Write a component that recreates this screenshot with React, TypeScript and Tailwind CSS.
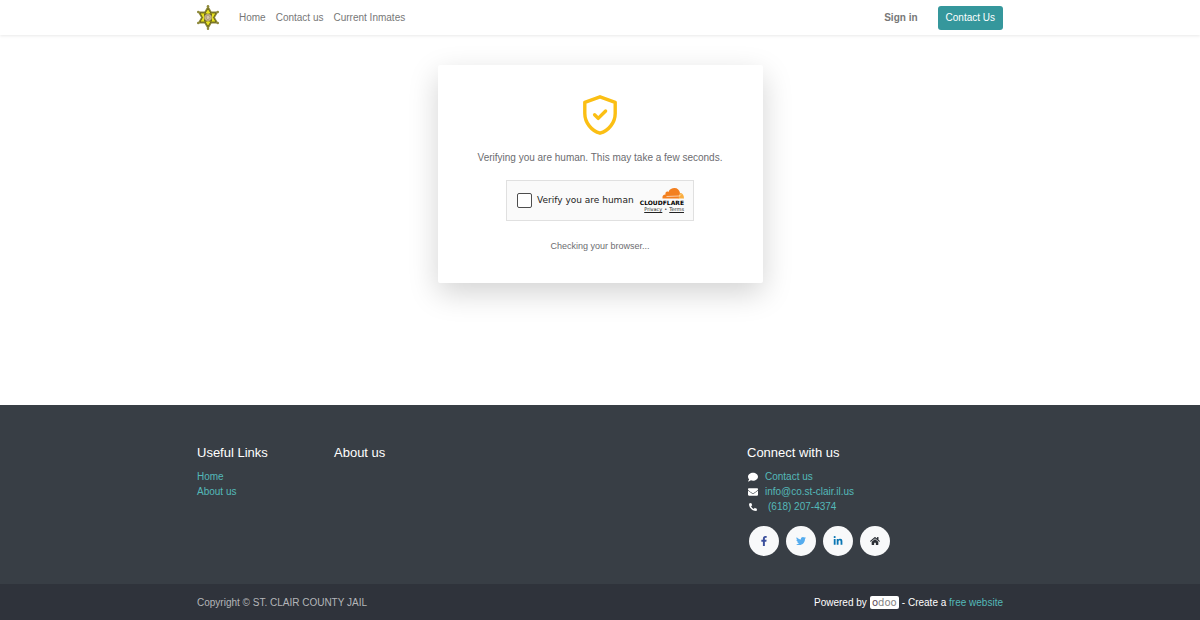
import type { ReactNode } from "react";
import { FaComment, FaEnvelope, FaFacebookF, FaHome, FaLinkedinIn, FaPhoneAlt, FaTwitter } from "react-icons/fa";

const navLinks = ["Home", "Contact us", "Current Inmates"];

const socials = [
  { name: "Facebook", icon: <FaFacebookF className="w-[10px] h-[10px] text-[#3b4f9c]" /> },
  { name: "Twitter", icon: <FaTwitter className="w-[10px] h-[10px] text-[#55acee]" /> },
  { name: "LinkedIn", icon: <FaLinkedinIn className="w-[10px] h-[10px] text-[#0976b4]" /> },
  { name: "Website", icon: <FaHome className="w-[10px] h-[10px] text-[#2b2f35]" /> },
];

function Container({ children, className = "" }: { children: ReactNode; className?: string }) {
  return <div className={`w-full max-w-[826px] mx-auto px-[10px] ${className}`}>{children}</div>;
}

function StarLogo() {
  return (
    <svg viewBox="0 0 44 50" className="w-[22px] h-[25px]" aria-hidden="true">
      <path
        d="M22 1 L29 13 L43 13 L36 25 L43 37 L29 37 L22 49 L15 37 L1 37 L8 25 L1 13 L15 13 Z"
        fill="#8f8a3c"
      />
      <path
        d="M22 7 L27.5 16 L38 16 L33 25 L38 34 L27.5 34 L22 43 L16.5 34 L6 34 L11 25 L6 16 L16.5 16 Z"
        fill="#e8e11f"
        stroke="#4d4b12"
        strokeWidth="1.4"
      />
      <path d="M15 17 L20 17 L14 23 Z M29 17 L24 17 L30 23 Z M15 33 L20 33 L14 27 Z M29 33 L24 33 L30 27 Z" fill="#2f2e0c" />
      <circle cx="22" cy="25" r="7.5" fill="#c9b98c" stroke="#7d7440" strokeWidth="1" />
      <path d="M18 22 L23 20 L26 25 L22 30 L19 27 Z" fill="#d8c8a8" stroke="#8c7662" />
      <g fill="#8f8a3c">
        <circle cx="22" cy="2.5" r="2.5" />
        <circle cx="22" cy="47.5" r="2.5" />
        <circle cx="2.5" cy="14" r="2.5" />
        <circle cx="41.5" cy="14" r="2.5" />
        <circle cx="2.5" cy="36" r="2.5" />
        <circle cx="41.5" cy="36" r="2.5" />
      </g>
    </svg>
  );
}

function ShieldCheck() {
  return (
    <svg
      viewBox="0 0 40 40"
      className="w-[40px] h-[40px]"
      fill="none"
      stroke="#fbbf14"
      strokeWidth="3.4"
      strokeLinecap="round"
      strokeLinejoin="round"
      aria-hidden="true"
    >
      <path d="M20 1.8 L35.2 7.3 V18.5 C35.2 27.5 28.5 36 20 38.2 C11.5 36 4.8 27.5 4.8 18.5 V7.3 Z" />
      <path d="M14.6 19.8 L18.2 23.4 L25.6 16" />
    </svg>
  );
}

function Turnstile() {
  return (
    <div className="flex items-center w-[188px] h-[41px] pl-[10px] pr-[9px] bg-[#fafafa] border border-[#e0e0e0] font-['DejaVu_Sans',sans-serif] text-[#232323]">
      <input
        id="human"
        type="checkbox"
        className="appearance-none shrink-0 w-[15px] h-[15px] bg-white border border-[#4d4d4d] rounded-[2px]"
      />
      <label htmlFor="human" className="ml-[5px] text-[9px] leading-[13px] whitespace-nowrap">
        Verify you are human
      </label>
      <div className="flex flex-col items-end ml-auto">
        <svg viewBox="0 0 44 22" className="w-[22px] h-[11px]" aria-hidden="true">
          <path
            d="M1 21 C0 16 3 13 7 13 C6 8 10 6 13 8 C15 2 20 0 25 0 C31 0 35 4 36 10 L34 21 Z"
            fill="#f38020"
          />
          <path d="M33 21 L36 10 C41 10 44 14 44 21 Z" fill="#faae40" />
          <path d="M9 17 L34 16 C36 16 37 14 38 13" fill="none" stroke="#fff" strokeWidth="1.2" />
        </svg>
        <span className="text-[6px] leading-[7px] font-bold text-black">CLOUDFLARE</span>
        <span className="flex gap-[2px] text-[5px] leading-[7px]">
          <a href="#privacy" className="underline">Privacy</a>
          <span>•</span>
          <a href="#terms" className="underline">Terms</a>
        </span>
      </div>
    </div>
  );
}

function ContactRow({ icon, children }: { icon: ReactNode; children: ReactNode }) {
  return (
    <li className="flex items-center">
      <span className="flex justify-center w-[12px] mr-[6px]">{icon}</span>
      {children}
    </li>
  );
}

export default function App() {
  return (
    <div className="min-h-screen flex flex-col bg-white font-['Liberation_Sans',Arial,sans-serif] text-[10px] leading-[15px]">
      <header className="relative bg-white shadow-[0_1px_3px_rgba(0,0,0,0.09)]">
        <Container className="flex items-center h-[35px] text-[#777777]">
          <a href="#home" aria-label="St. Clair County Jail">
            <StarLogo />
          </a>
          <nav className="flex gap-[10px] ml-[20px]">
            {navLinks.map((link) => (
              <a key={link} href="#nav">{link}</a>
            ))}
          </nav>
          <a href="#login" className="ml-auto mr-[20px] font-bold">Sign in</a>
          <button type="button" className="h-[24px] px-[8px] rounded-[3px] bg-[#35979c] text-white">
            Contact Us
          </button>
        </Container>
      </header>

      <main className="flex-1 pt-[30px] pb-[60px]">
        <section className="flex flex-col items-center w-full max-w-[325px] mx-auto py-[30px] bg-white rounded-[2px] shadow-[0_10px_30px_rgba(0,0,0,0.175)] text-[#6c6c70]">
          <ShieldCheck />
          <p className="mt-[15px] mb-[15px]">Verifying you are human. This may take a few seconds.</p>
          <Turnstile />
          <p className="mt-[18px] text-[9px] leading-[14px]">Checking your browser...</p>
        </section>
      </main>

      <footer className="bg-[#383e45] text-white">
        <Container className="flex pt-[40px] pb-[28px]">
          <div className="w-[137px]">
            <h5 className="mb-[9px] text-[13px] leading-[15px]">Useful Links</h5>
            <ul className="text-[#54b9b9]">
              <li><a href="#home">Home</a></li>
              <li><a href="#about">About us</a></li>
            </ul>
          </div>
          <div className="flex-1">
            <h5 className="text-[13px] leading-[15px]">About us</h5>
          </div>
          <div className="w-[256px]">
            <h5 className="mb-[9px] text-[13px] leading-[15px]">Connect with us</h5>
            <ul className="text-[#54b9b9]">
              <ContactRow icon={<FaComment className="w-[10px] h-[10px] text-white" />}>
                <a href="#contact">Contact us</a>
              </ContactRow>
              <ContactRow icon={<FaEnvelope className="w-[10px] h-[10px] text-white" />}>
                <a href="mailto:info@co.st-clair.il.us">info@co.st-clair.il.us</a>
              </ContactRow>
              <ContactRow icon={<FaPhoneAlt className="w-[8px] h-[8px] text-white" />}>
                <a href="tel:6182074374" className="pl-[3px]">(618) 207-4374</a>
              </ContactRow>
            </ul>
            <div className="flex gap-[7px] mt-[12px] ml-[2px]">
              {socials.map((s) => (
                <a
                  key={s.name}
                  href="#social"
                  aria-label={s.name}
                  className="flex items-center justify-center w-[30px] h-[30px] rounded-full bg-[#f8f9fa]"
                >
                  {s.icon}
                </a>
              ))}
            </div>
          </div>
        </Container>
        <div className="bg-[#2f333b]">
          <Container className="flex items-center justify-between h-[36px]">
            <span className="text-[#b4b6b9]">Copyright © ST. CLAIR COUNTY JAIL</span>
            <span className="flex items-center gap-[3px]">
              Powered by
              <a
                href="#odoo"
                className="flex items-center justify-center w-[29px] h-[13px] rounded-[2px] bg-white font-['DejaVu_Sans',sans-serif] text-[10px] leading-[13px] text-[#858585]"
              >
                <span className="text-[#5f4a59]">o</span>doo
              </a>
              <span>
                - Create a <a href="#website" className="text-[#54b9b9]">free website</a>
              </span>
            </span>
          </Container>
        </div>
      </footer>
    </div>
  );
}
